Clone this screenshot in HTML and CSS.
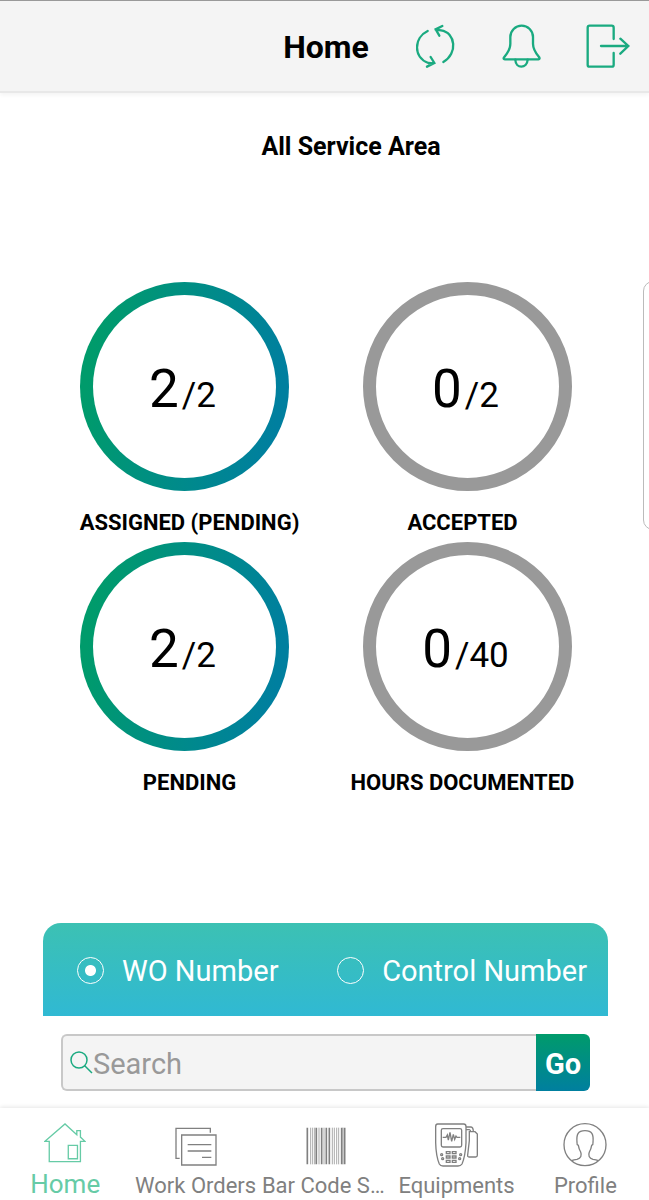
FILE: index.html
```
<!DOCTYPE html>
<html lang="en">
<head>
  <meta charset="UTF-8">
  <meta name="viewport" content="width=device-width, initial-scale=1.0">
  <title>Home</title>
  <link rel="stylesheet" href="styles.css">
</head>
<body>

<header class="topbar">
  <h1 class="topbar-title">Home</h1>
  <div class="topbar-actions">
    <button class="icon-btn" type="button" aria-label="Refresh">
      <svg width="40" height="44" viewBox="47 71 120 132">
        <path d="M82 92C40 112 38 172 84 188L100 189M80 199L102 188L91 170"/>
        <path d="M129 185C173 160 166 96 122 90L106 88M126 77L106 87L117 106"/>
      </svg>
    </button>
    <button class="icon-btn" type="button" aria-label="Notifications">
      <svg width="40" height="44" viewBox="304 71 120 132">
        <path d="M316 177Q309 176 314 170Q332 148 332 130V110A34 34 0 0 1 400 110V130Q400 148 418 170Q422 176 416 177Z"/>
        <path d="M347 178C348 206 382 206 384 178"/>
      </svg>
    </button>
    <button class="icon-btn" type="button" aria-label="Log out">
      <svg width="44" height="44" viewBox="559 71 132 132">
        <path d="M642 116V82Q642 76 636 76H570Q564 76 564 82V193Q564 199 570 199H636Q642 199 642 193V158"/>
        <path d="M604 137H686M662 115L686 137L662 160"/>
      </svg>
    </button>
  </div>
</header>

<main class="content">
  <h2 class="area-title">All Service Area</h2>

  <div class="slider">
    <section class="slide">
      <div class="meter">
        <div class="ring ring-active"><p class="count">2<small>/2</small></p></div>
        <h3 class="meter-label">ASSIGNED (PENDING)</h3>
      </div>
      <div class="meter">
        <div class="ring"><p class="count">0<small>/2</small></p></div>
        <h3 class="meter-label">ACCEPTED</h3>
      </div>
      <div class="meter">
        <div class="ring ring-active"><p class="count">2<small>/2</small></p></div>
        <h3 class="meter-label">PENDING</h3>
      </div>
      <div class="meter">
        <div class="ring"><p class="count">0<small>/40</small></p></div>
        <h3 class="meter-label">HOURS DOCUMENTED</h3>
      </div>
    </section>
    <div class="next-slide"></div>
  </div>

  <form class="lookup">
    <div class="lookup-types">
      <label class="lookup-type"><input type="radio" name="type" checked>WO Number</label>
      <label class="lookup-type"><input type="radio" name="type">Control Number</label>
    </div>
    <div class="lookup-row">
      <label class="search-box">
        <svg class="search-icon" width="23" height="23" viewBox="0 0 23 23"><circle cx="9" cy="9" r="8"/><path d="M14.500 14.500L22 22"/></svg>
        <input type="text" placeholder="Search" aria-label="Search">
      </label>
      <button class="go-btn" type="submit">Go</button>
    </div>
  </form>
</main>

<nav class="tabbar">
  <a class="tab tab-active" href="#">
    <svg width="42" height="42" viewBox="132 64 128 126">
      <path d="M148 122H135L196 69L232 102V89H243V109L257 122H243V184H148ZM206 134H234V175H206Z"/>
    </svg>
    <span>Home</span>
  </a>
  <a class="tab" href="#">
    <svg width="42" height="42" viewBox="524 77 126 126">
      <path d="M544 104H647V194H544ZM538 174H527V84H630V97M562 133H633M562 152H633M605 171H633"/>
    </svg>
    <span>Work Orders</span>
  </a>
  <a class="tab" href="#">
    <svg width="42" height="42" viewBox="44 76 126 126">
      <path stroke-width="5" d="M51 81V191M78 81V191M94 81V191M108 81V191M117 81V191M154 81V191M163 81V191"/>
      <path stroke-width="2" d="M61 81V191M67 81V191M73 81V191M86 81V191M101 81V191M126 81V191M132 81V191M139 81V191M145 81V191M158 81V191"/>
    </svg>
    <span>Bar Code Scan</span>
  </a>
  <a class="tab" href="#">
    <svg width="46" height="46" viewBox="432 68 138 138">
      <path d="M443 74H521Q528 74 528 82V130Q526 170 516 194Q512 200 504 200H459Q451 200 448 194Q438 170 437 130V82Q437 74 443 74Z"/>
      <rect x="454" y="88" width="61" height="55" rx="5"/>
      <path d="M458 114H468L472 107L475 122L480 99L485 126L490 105L494 120L498 110L501 114H511"/>
      <path d="M528 83H543Q550 84 550 97M528 91H538Q542 92 542 97M538 97H555L562 104V168Q562 173 557 173H537Q532 173 533 167L538 124Z"/>
      <path d="M469 157H480V163H469ZM487 157H498V163H487ZM469 170H480V176H469ZM487 170H498V176H487ZM469 183H480V189H469ZM487 183H498V189H487Z"/>
      <circle cx="455" cy="166" r="3"/><circle cx="458" cy="178" r="3"/><circle cx="512" cy="166" r="3"/><circle cx="509" cy="178" r="3"/>
    </svg>
    <span>Equipments</span>
  </a>
  <a class="tab" href="#">
    <svg width="46" height="46" viewBox="821 68 138 138">
      <circle cx="890" cy="136" r="63"/>
      <path d="M850 184Q856 181 866 180C878 176 881 168 877 158Q872 150 870 138Q865 136 866 129C864 106 868 94 890 94S916 106 914 129Q915 136 910 138Q908 150 903 158C899 168 902 176 914 180Q924 181 930 184"/>
    </svg>
    <span>Profile</span>
  </a>
</nav>

</body>
</html>
```
FILE: styles.css
```
* { box-sizing: border-box; }
body {
  margin: 0;
  min-height: 100vh;
  display: flex;
  flex-direction: column;
  font-family: Roboto, sans-serif;
  background-color: #fff;
  color: #000;
}
h1, h2, h3, p { margin: 0; }
button, input { font-family: inherit; }
svg {
  flex: none;
  fill: none;
  stroke: currentColor;
}

/* header */
.topbar {
  display: grid;
  grid-template-columns: 1fr auto 1fr;
  align-items: center;
  height: 93px;
  padding: 0 19px 0 22px;
  background-color: #f4f4f4;
  border-top: 1px solid #999;
  border-bottom: 2px solid #e8e8e8;
  box-shadow: 0 2px 4px rgba(0, 0, 0, 0.05);
}
.topbar-title {
  grid-column: 2;
  padding-top: 2px;
  font-size: 32px;
  line-height: 40px;
}
.topbar-actions {
  display: flex;
  justify-content: flex-end;
  gap: 45px;
}
.icon-btn {
  display: flex;
  padding: 0;
  border: none;
  background: none;
  color: #1aaa80;
  cursor: pointer;
}
.icon-btn svg {
  stroke-width: 7;
  stroke-linecap: round;
}

.content {
  flex: 1;
  overflow: hidden;
}
.area-title {
  padding: 39px 0 0 53px;
  font-size: 25px;
  line-height: 30px;
  text-align: center;
}

/* counters */
.slider {
  display: flex;
  margin-top: 119px;
}
.slide {
  flex: 0 0 calc(100% - 6px);
  display: grid;
  grid-template-columns: 1fr 1fr;
  padding: 1px 44px 0 53px;
}
.meter {
  display: flex;
  flex-direction: column;
  align-items: center;
}
.ring {
  display: flex;
  align-items: center;
  justify-content: center;
  width: 209px;
  height: 209px;
  padding: 12px 4px 0 0;
  border: 13px solid #999;
  border-radius: 50%;
}
.ring-active {
  border-color: transparent;
  background: linear-gradient(#fff, #fff) padding-box,
    linear-gradient(100deg, #009b6b 10%, #008c87 50%, #007f9f 90%) border-box;
}
.meter:nth-child(odd) .ring { margin-right: 10px; }
.meter:nth-child(even) .ring { margin-left: 10px; }
.count {
  font-size: 53px;
  line-height: 60px;
}
.count small {
  margin-left: 3px;
  font-size: 35px;
}
.meter-label {
  margin: 17px 0 4px;
  font-size: 22px;
  line-height: 30px;
  white-space: nowrap;
}
.next-slide {
  flex: 0 0 100%;
  height: 249px;
  border: 1px solid #bbb;
  border-radius: 10px;
}

/* search */
.lookup { margin: 121px 41px 17px 43px; }
.lookup-types {
  display: flex;
  align-items: center;
  justify-content: space-between;
  height: 93px;
  padding: 2px 21px 0 34px;
  border-radius: 18px 18px 0 0;
  background: linear-gradient(#3cc1b3, #30b9d3);
  color: #fff;
}
.lookup-type {
  display: flex;
  align-items: center;
  gap: 18px;
  font-size: 29px;
}
.lookup-type input {
  appearance: none;
  width: 27px;
  height: 27px;
  margin: 0;
  border: 1px solid #fff;
  border-radius: 50%;
}
.lookup-type input:checked {
  background: radial-gradient(circle, #fff 5px, transparent 6px);
}
.lookup-row {
  display: flex;
  margin: 18px 18px 0;
}
.search-box {
  flex: 1;
  display: flex;
  align-items: center;
  height: 57px;
  padding-left: 7px;
  border: 2px solid #c8c8c8;
  border-right: none;
  border-radius: 6px 0 0 6px;
  background-color: #f4f4f4;
}
.search-icon {
  color: #1aaa80;
  stroke-width: 1.5;
}
.search-box input {
  flex: 1;
  min-width: 0;
  padding: 2px 0 0;
  border: none;
  outline: none;
  background: none;
  font-size: 29px;
}
.search-box input::placeholder { color: #999; }
.go-btn {
  width: 54px;
  padding: 2px 0 0;
  border: none;
  border-radius: 0 6px 6px 0;
  background: linear-gradient(#009b6b, #007f9f);
  color: #fff;
  font-size: 29px;
  font-weight: bold;
  cursor: pointer;
}

/* bottom tabs */
.tabbar {
  display: grid;
  grid-template-columns: repeat(4, 20.1%) minmax(0, 1fr);
  height: 92px;
  background-color: #fff;
  box-shadow: 0 -1px 4px rgba(0, 0, 0, 0.1);
}
.tab {
  display: flex;
  flex-direction: column;
  align-items: center;
  justify-content: flex-end;
  color: #808080;
  font-size: 22px;
  line-height: 28px;
  text-decoration: none;
}
.tab svg {
  margin-bottom: 4px;
  stroke-width: 4;
}
.tab span {
  max-width: 100%;
  padding: 0 1px;
  overflow: hidden;
  text-overflow: ellipsis;
  white-space: nowrap;
}
.tab-active {
  color: #66cba6;
  font-size: 26px;
  line-height: 32px;
}
```
